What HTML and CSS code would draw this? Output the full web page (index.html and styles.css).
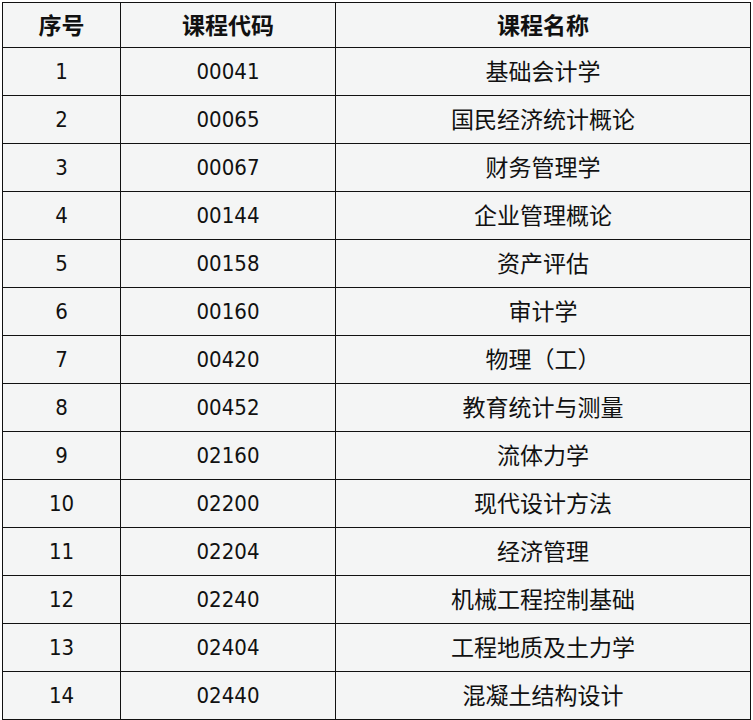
FILE: index.html
```html
<!DOCTYPE html>
<html lang="zh-CN">
<head>
<meta charset="utf-8">
<title>课程列表</title>
<link rel="stylesheet" href="styles.css">
</head>
<body>
<div class="wrap">
<table class="courses">
<colgroup><col class="c1"><col class="c2"><col class="c3"></colgroup>
<thead>
<tr><th>序号</th><th>课程代码</th><th>课程名称</th></tr>
</thead>
<tbody>
<tr><td>1</td><td>00041</td><td>基础会计学</td></tr>
<tr><td>2</td><td>00065</td><td>国民经济统计概论</td></tr>
<tr><td>3</td><td>00067</td><td>财务管理学</td></tr>
<tr><td>4</td><td>00144</td><td>企业管理概论</td></tr>
<tr><td>5</td><td>00158</td><td>资产评估</td></tr>
<tr><td>6</td><td>00160</td><td>审计学</td></tr>
<tr><td>7</td><td>00420</td><td>物理（工）</td></tr>
<tr><td>8</td><td>00452</td><td>教育统计与测量</td></tr>
<tr><td>9</td><td>02160</td><td>流体力学</td></tr>
<tr><td>10</td><td>02200</td><td>现代设计方法</td></tr>
<tr><td>11</td><td>02204</td><td>经济管理</td></tr>
<tr><td>12</td><td>02240</td><td>机械工程控制基础</td></tr>
<tr><td>13</td><td>02404</td><td>工程地质及土力学</td></tr>
<tr><td>14</td><td>02440</td><td>混凝土结构设计</td></tr>
</tbody>
</table>
</div>
</body>
</html>
```
FILE: styles.css
```css
html, body {
  margin: 0;
  padding: 0;
  background: #ffffff;
}
.wrap {
  padding: 2px 0 0 2px;
}
.courses {
  border-collapse: collapse;
  table-layout: fixed;
  width: 748px;
  background: #f4f5f5;
  color: #111111;
  font-family: "DejaVu Sans Condensed", "DejaVu Sans", "Noto Sans CJK SC", sans-serif;
  font-size: 22px;
}
.c1 { width: 118px; }
.c2 { width: 215px; }
.c3 { width: 415px; }
.courses th,
.courses td {
  border: 1px solid #111111;
  text-align: center;
  vertical-align: middle;
  padding: 0;
}
.courses th {
  height: 41px;
  padding-bottom: 3px;
  font-weight: bold;
  font-family: "Noto Sans CJK SC", sans-serif;
  font-size: 23px;
}
.courses td {
  height: 47px;
}
.courses td:nth-child(3) {
  height: 44px;
  padding-bottom: 3px;
  font-family: "Noto Sans CJK SC", sans-serif;
  font-size: 23px;
}
```
